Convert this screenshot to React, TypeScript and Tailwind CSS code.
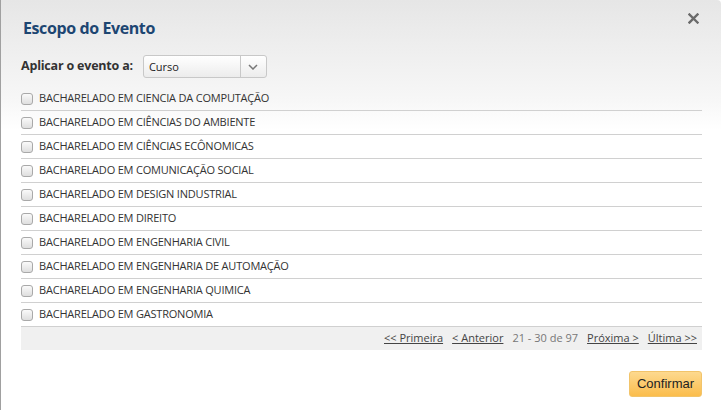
import React from "react";

const cursos = [
  "BACHARELADO EM CIENCIA DA COMPUTAÇÃO",
  "BACHARELADO EM CIÊNCIAS DO AMBIENTE",
  "BACHARELADO EM CIÊNCIAS ECÔNOMICAS",
  "BACHARELADO EM COMUNICAÇÃO SOCIAL",
  "BACHARELADO EM DESIGN INDUSTRIAL",
  "BACHARELADO EM DIREITO",
  "BACHARELADO EM ENGENHARIA CIVIL",
  "BACHARELADO EM ENGENHARIA DE AUTOMAÇÃO",
  "BACHARELADO EM ENGENHARIA QUIMICA",
  "BACHARELADO EM GASTRONOMIA",
];

export default function App() {
  return (
    <div
      className="relative w-[721px] h-[410px] overflow-hidden border-l border-[#a0a0a0] rounded-tr-[4px] bg-[linear-gradient(to_bottom,#e6e6e6_0px,#f7f7f7_100px,#ffffff_130px)] text-[#333]"
      style={{ fontFamily: '"Open Sans", "Noto Sans", sans-serif' }}
    >
      <button className="absolute left-[687px] top-[13px]">
        <svg width="11" height="11" viewBox="0 0 11 11">
          <path d="M1.5 1.5 L9.5 9.5 M9.5 1.5 L1.5 9.5" stroke="#6a6a6a" strokeWidth="2.4" strokeLinecap="square" />
        </svg>
      </button>
      <div className="pl-[20px] pr-[19px] pt-[16px]">
        <h1 className="text-[16px] font-bold text-[#1d4672] leading-[24px] tracking-[-0.4px] ml-[2px]">Escopo do Evento</h1>
        <div className="flex items-center mt-[15px] h-[23px]">
          <span className="text-[12.5px] font-bold text-[#333] tracking-[-0.2px]">Aplicar o evento a:</span>
          <div className="ml-[10px] flex w-[124px] h-[23px] rounded-[3px] border border-[#c8c8c8] bg-[linear-gradient(to_bottom,#ffffff,#ececec)]">
            <span className="flex-1 pl-[5px] text-[11px] leading-[21px] text-[#222]">Curso</span>
            <span className="w-[26px] border-l border-[#c8c8c8] flex items-center justify-center">
              <svg width="10" height="6" viewBox="0 0 10 6">
                <path d="M1 1 L5 5 L9 1" fill="none" stroke="#777" strokeWidth="1.5" />
              </svg>
            </span>
          </div>
        </div>
        <div className="mt-[9px]">
          {cursos.map((c) => (
            <div key={c} className="flex items-center h-[24px] border-b border-[#d0d0d0]">
              <span className="w-[12px] h-[12px] rounded-[3px] border border-[#a9a9a9] bg-[linear-gradient(to_bottom,#fafafa,#dedede)]" />
              <span className="ml-[6px] text-[11px] text-[#333] tracking-[-0.2px]">{c}</span>
            </div>
          ))}
          <div className="flex items-center justify-end gap-[9px] h-[23px] bg-[#f0f0f0] pr-[5px] text-[11px]">
            <a className="underline text-[#444]">&lt;&lt; Primeira</a>
            <a className="underline text-[#444]">&lt; Anterior</a>
            <span className="text-[#777]">21 - 30 de 97</span>
            <a className="underline text-[#444]">Próxima &gt;</a>
            <a className="underline text-[#444]">Última &gt;&gt;</a>
          </div>
        </div>
        <div className="flex justify-end mt-[21px]">
          <button
            className="w-[73px] h-[26px] rounded-[3px] border border-[#f2c46a] bg-[linear-gradient(to_bottom,#fdd98f,#fbbd4c)] text-[13px] text-[#222]"
            style={{ fontFamily: '"Liberation Sans", Arial, sans-serif' }}
          >
            Confirmar
          </button>
        </div>
      </div>
    </div>
  );
}
